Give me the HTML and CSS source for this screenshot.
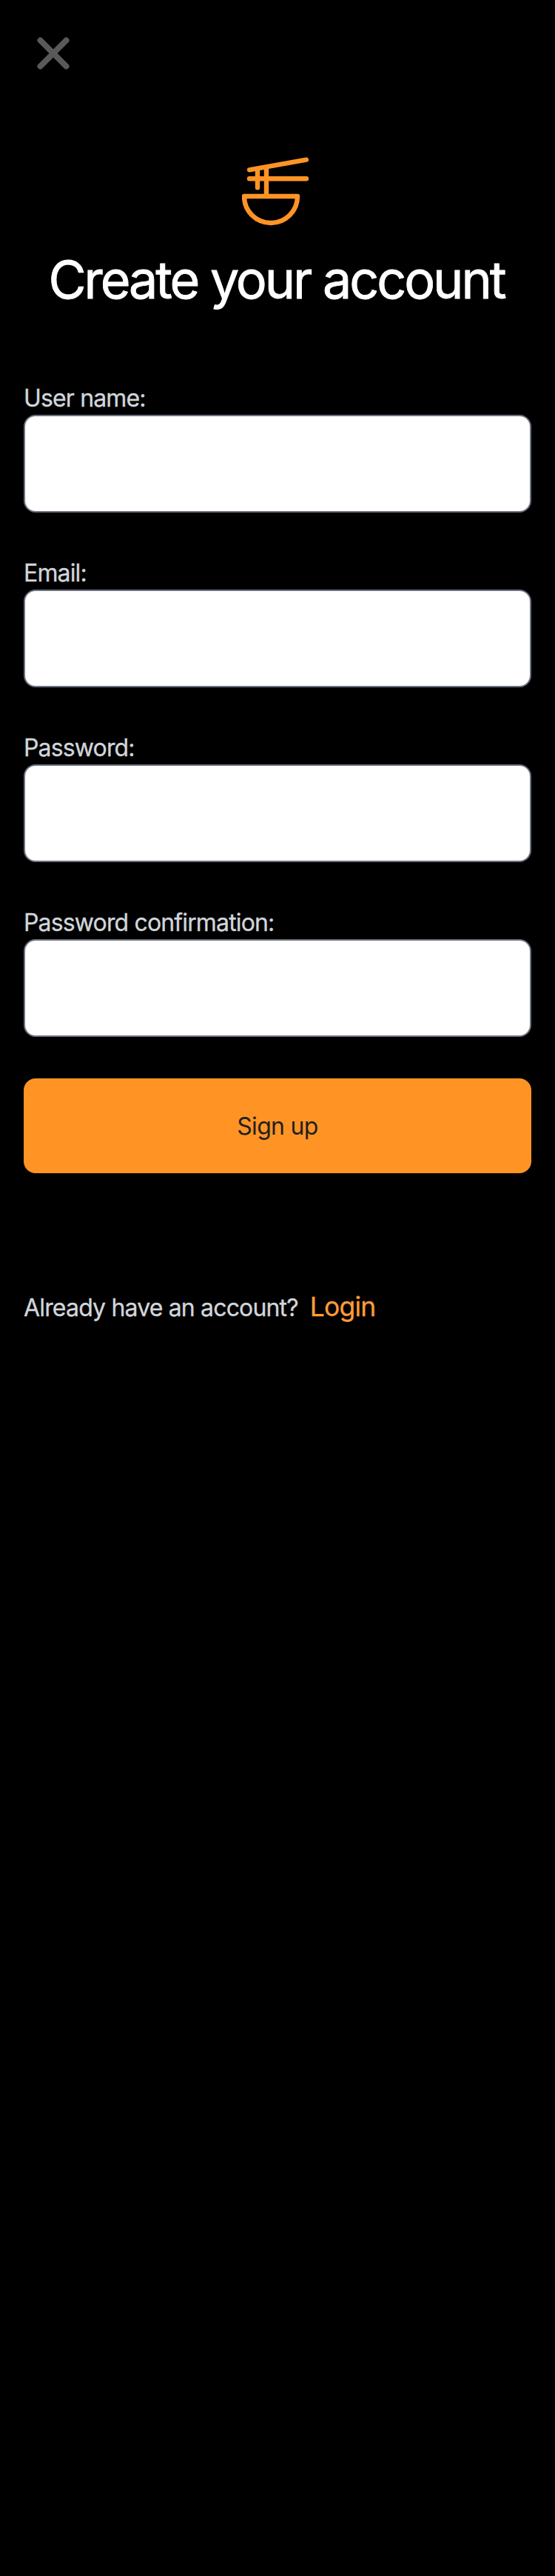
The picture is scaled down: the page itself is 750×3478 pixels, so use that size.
FILE: index.html
```html
<!DOCTYPE html>
<html lang="en">
<head>
<meta charset="utf-8">
<title>Create your account</title>
<link rel="stylesheet" href="styles.css">
</head>
<body>
<main class="page">
  <button class="close" type="button" aria-label="Close">
    <svg class="close-icon" viewBox="0 0 44 44"><path d="M4.5 4.5 39.5 39.5M39.5 4.5 4.5 39.5"/></svg>
  </button>
  <header class="header">
    <svg class="logo" viewBox="0 0 96 96"><path d="M10 20.3 87 6.7M10 32.3H87M21 19V44.3M33 17V56M3 56H75C75 76 59 92 39 92S3 76 3 56Z"/></svg>
    <h1 class="title">Create your account</h1>
  </header>
  <form class="form">
    <div class="field"><label class="label" for="user">User name:</label><input class="input" id="user" type="text"></div>
    <div class="field"><label class="label" for="email">Email:</label><input class="input" id="email" type="email"></div>
    <div class="field"><label class="label" for="password">Password:</label><input class="input" id="password" type="password"></div>
    <div class="field"><label class="label" for="confirm">Password confirmation:</label><input class="input" id="confirm" type="password"></div>
    <button class="submit" type="button">Sign up</button>
  </form>
  <p class="footer"><span class="question">Already have an account?</span><a class="login" href="#">Login</a></p>
</main>
</body>
</html>
```
FILE: styles.css
```css
* { box-sizing: border-box; }
body {
  margin: 0;
  background: #000;
  color: #d1d5db;
  font-family: Inter, "Liberation Sans", sans-serif;
}
.page {
  min-height: 3478px;
  padding: 50px 32px 0;
  display: flex;
  flex-direction: column;
}
.close {
  width: 44px;
  height: 44px;
  margin-left: 18px;
  padding: 0;
  border: 0;
  background: none;
}
.close-icon { display: block; fill: none; stroke: #595959; stroke-width: 8; stroke-linecap: round; }
.header {
  margin-top: 115px;
  display: flex;
  flex-direction: column;
  align-items: center;
}
.logo {
  width: 96px;
  height: 96px;
  fill: none;
  stroke: #ff9425;
  stroke-width: 6.4;
  stroke-linecap: round;
  stroke-linejoin: round;
}
.title {
  margin: 30px 3px 0 0;
  color: #fff;
  font-size: 70px;
  font-weight: 400;
  line-height: 86px;
  letter-spacing: -3.05px;
  -webkit-text-stroke: 0.8px currentColor;
  white-space: nowrap;
}
.form {
  margin-top: 91px;
  display: flex;
  flex-direction: column;
  gap: 56px;
}
.field { display: flex; flex-direction: column; }
.label {
  padding-top: 3px;
  font-size: 32px;
  line-height: 45px;
  letter-spacing: -0.85px;
  -webkit-text-stroke: 0.3px currentColor;
}
.input {
  width: 100%;
  height: 132px;
  padding: 0 32px;
  border: 2px solid #6b7280;
  border-radius: 16px;
  background: #fff;
  font: inherit;
  font-size: 32px;
}
.submit {
  height: 128px;
  border: 0;
  border-radius: 16px;
  background: #ff9425;
  color: #1f1f1f;
  font: inherit;
  font-size: 32px;
  letter-spacing: -0.7px;
}
.footer {
  margin: 157px 0 0;
  display: flex;
  align-items: baseline;
  gap: 16px;
  font-size: 32px;
  line-height: 48px;
  letter-spacing: -0.83px;
  -webkit-text-stroke: 0.3px currentColor;
}
.login {
  color: #ff9c38;
  font-size: 35.5px;
  text-decoration: none;
}
```
